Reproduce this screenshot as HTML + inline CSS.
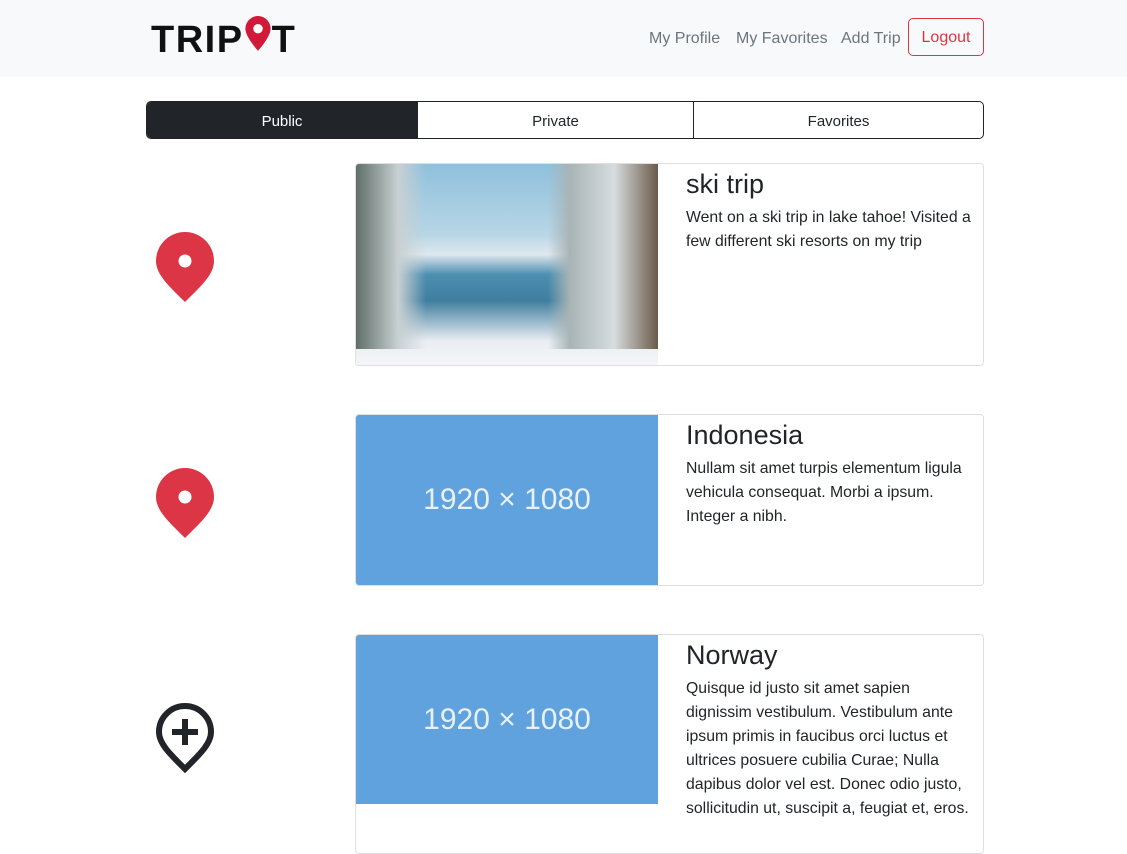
<!DOCTYPE html>
<html><head><meta charset="utf-8"><style>
*{box-sizing:border-box;margin:0;padding:0}
body{width:1127px;height:832px;overflow:hidden;background:#fff;font-family:"Liberation Sans",sans-serif;color:#212529;position:relative}
.nav{position:absolute;left:0;top:0;width:1127px;height:77px;background:#f8f9fa}
.logo{position:absolute;left:151px;top:20px;font-weight:bold;font-size:38px;letter-spacing:1.5px;color:#111;line-height:40px}
.links{position:absolute;top:30px;font-size:16px;color:#6c757d}
.logout{position:absolute;left:908px;top:18px;width:76px;height:38px;border:1px solid #dc3545;border-radius:5px;color:#dc3545;font-size:16px;text-align:center;line-height:38px}
.tabs{position:absolute;left:146px;top:101px;width:838px;height:38px;border:1px solid #212529;border-radius:5px;overflow:hidden;display:flex;font-size:15px}
.tabs div{text-align:center;line-height:40px}
.card{position:absolute;left:355px;width:629px;border:1px solid #dfdfdf;border-radius:4px;overflow:hidden}
.img{position:absolute;left:0;top:0;width:302px}
.ph{background:#5fa2dd;color:#e8f1fa;font-size:30px;text-align:center;font-weight:300}
.body{position:absolute;left:330px;top:4px;right:6px}
.body h2{font-weight:normal;font-size:27px;line-height:32px;margin-bottom:6px}
.body p{font-size:15.8px;line-height:24px}
.pin{position:absolute;left:155px}
</style></head><body>
<div class="nav">
<div class="logo">TRIP<span style="display:inline-block;width:28px;vertical-align:top;position:relative;top:-5px"><svg width="28" height="40" viewBox="0 0 26 38"><path d="M13 1A12 12 0 0 0 1 13c0 8 12 21 12 21s12-13 12-21A12 12 0 0 0 13 1z" fill="#d11a3a"/><circle cx="13" cy="13" r="4.5" fill="#fff"/></svg></span>T</div>
<div class="links" style="left:649px">My Profile</div>
<div class="links" style="left:736px">My Favorites</div>
<div class="links" style="left:841px">Add Trip</div>
<div class="logout">Logout</div>
</div>
<div class="tabs">
<div style="width:270px;background:#212529;color:#fff">Public</div>
<div style="width:277px;border-right:1px solid #212529;border-left:1px solid #212529">Private</div>
<div style="flex:1">Favorites</div>
</div>

<svg class="pin" style="top:231px" width="60" height="72" viewBox="0 0 60 72"><path d="M30 1A29 29 0 0 0 1 30c0 14 14 26 29 41C45 56 59 44 59 30A29 29 0 0 0 30 1z" fill="#dc3545"/><circle cx="30" cy="30" r="6.5" fill="#fff"/></svg>
<svg class="pin" style="top:467px" width="60" height="72" viewBox="0 0 60 72"><path d="M30 1A29 29 0 0 0 1 30c0 14 14 26 29 41C45 56 59 44 59 30A29 29 0 0 0 30 1z" fill="#dc3545"/><circle cx="30" cy="30" r="6.5" fill="#fff"/></svg>
<svg class="pin" style="top:702px" width="60" height="72" viewBox="0 0 60 72"><path d="M30 4A26 26 0 0 0 4 30c0 12 12 23 26 37C44 53 56 42 56 30A26 26 0 0 0 30 4z" fill="none" stroke="#212529" stroke-width="6"/><path d="M30 17v26M17 30h26" stroke="#212529" stroke-width="6"/></svg>

<div class="card" style="top:163px;height:203px">
<div class="img" style="height:201px;background:linear-gradient(180deg,#8fc0dc 0%,#b7d6e6 35%,#dfe8ee 45%,#4d8fb0 55%,#3f7e9f 68%,#e9eef2 88%,#f4f6f8 100%)">
<div style="position:absolute;left:0;top:0;width:70px;height:185px;background:linear-gradient(90deg,#5f6f68,#c8d0d2 60%,transparent)"></div>
<div style="position:absolute;right:0;top:0;width:110px;height:185px;background:linear-gradient(270deg,#6b5a4a,#d7dddf 40%,#a8b4b6 80%,transparent)"></div>
</div>
<div class="body"><h2>ski trip</h2><p>Went on a ski trip in lake tahoe! Visited a few different ski resorts on my trip</p></div>
</div>
<div class="card" style="top:414px;height:172px">
<div class="img ph" style="height:170px;line-height:170px">1920 × 1080</div>
<div class="body"><h2>Indonesia</h2><p>Nullam sit amet turpis elementum ligula vehicula consequat. Morbi a ipsum. Integer a nibh.</p></div>
</div>
<div class="card" style="top:634px;height:220px">
<div class="img ph" style="height:169px;line-height:169px">1920 × 1080</div>
<div class="body"><h2>Norway</h2><p>Quisque id justo sit amet sapien dignissim vestibulum. Vestibulum ante ipsum primis in faucibus orci luctus et ultrices posuere cubilia Curae; Nulla dapibus dolor vel est. Donec odio justo, sollicitudin ut, suscipit a, feugiat et, eros.</p></div>
</div>
</body></html>
